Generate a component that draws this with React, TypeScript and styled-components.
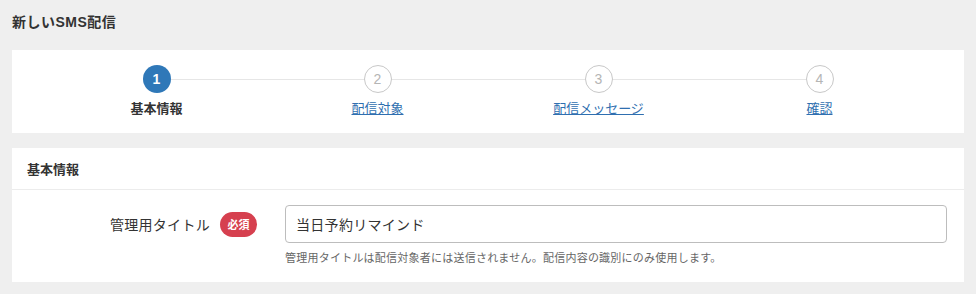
import React from 'react';
import styled, { createGlobalStyle } from 'styled-components';

const GlobalStyle = createGlobalStyle`
    body {
        margin: 0;
        background: #efefef;
        font-family: 'Liberation Sans', 'Noto Sans CJK JP', sans-serif;
        color: #333;
    }
`;

const Page = styled.div`
    padding: 12px 12px 13px 12px;
`;

const PageTitle = styled.h1`
    margin: 0 0 18px 0;
    font-size: 14px;
    line-height: 20px;
    font-weight: bold;
    letter-spacing: 0.5px;
    color: #333;
`;

const Card = styled.div<{ $gap?: number }>`
    background: #fff;
    margin-bottom: ${(p) => p.$gap || 0}px;
`;

const Stepper = styled.ol`
    list-style: none;
    margin: 0;
    padding: 15px 34px 15px 34px;
    display: grid;
    grid-template-columns: repeat(4, 1fr);
`;

const Step = styled.li<{ $last?: boolean }>`
    position: relative;
    display: flex;
    flex-direction: column;
    align-items: center;
    gap: 7px;
    &::after {
        content: '';
        display: ${(p) => (p.$last ? 'none' : 'block')};
        position: absolute;
        top: 14px;
        left: 50%;
        width: 100%;
        height: 1px;
        background: #e6e6e6;
    }
`;

const StepNum = styled.span<{ $active?: boolean }>`
    position: relative;
    z-index: 1;
    box-sizing: border-box;
    width: 28px;
    height: 28px;
    border-radius: 50%;
    display: flex;
    align-items: center;
    justify-content: center;
    font-size: 14px;
    font-weight: ${(p) => (p.$active ? 'bold' : 'normal')};
    background: ${(p) => (p.$active ? '#2f78b8' : '#fff')};
    color: ${(p) => (p.$active ? '#fff' : '#b5b5b5')};
    border: ${(p) => (p.$active ? 'none' : '1px solid #c8c8c8')};
`;

const StepLabel = styled.span`
    font-size: 13px;
    line-height: 18px;
    font-weight: bold;
    color: #333;
`;

const StepLink = styled.a`
    font-size: 13px;
    line-height: 18px;
    color: #2f6fb0;
    text-decoration: underline;
`;

const CardHeader = styled.div`
    height: 42px;
    box-sizing: border-box;
    padding: 0 15px;
    display: flex;
    align-items: center;
    font-size: 13px;
    font-weight: bold;
    border-bottom: 1px solid #ececec;
`;

const FormRow = styled.div`
    display: grid;
    grid-template-columns: 245px 1fr;
    column-gap: 28px;
    padding: 15px 17px 16px 0;
`;

const FieldLabel = styled.div`
    height: 38px;
    display: flex;
    align-items: center;
    justify-content: flex-end;
    gap: 10px;
    font-size: 14px;
    letter-spacing: 0.3px;
    color: #333;
`;

const Required = styled.span`
    display: inline-flex;
    align-items: center;
    justify-content: center;
    width: 37px;
    height: 25px;
    border-radius: 13px;
    background: #d6404f;
    color: #fff;
    font-size: 11px;
    font-weight: bold;
    letter-spacing: 0;
`;

const Field = styled.div`
    display: flex;
    flex-direction: column;
    gap: 7px;
`;

const TextInput = styled.input`
    box-sizing: border-box;
    width: 100%;
    height: 38px;
    padding: 0 10px;
    border: 1px solid #bdbdbd;
    border-radius: 4px;
    font-family: 'Liberation Sans', 'Noto Sans CJK JP', sans-serif;
    font-size: 14px;
    letter-spacing: 0.3px;
    color: #333;
    outline: none;
`;

const Help = styled.p`
    margin: 0;
    font-size: 11px;
    line-height: 16px;
    letter-spacing: 0.23px;
    color: #666;
`;

const steps = ['基本情報', '配信対象', '配信メッセージ', '確認'];

const App: React.FC = () => {
    return (
        <Page>
            <GlobalStyle />
            <PageTitle>新しいSMS配信</PageTitle>
            <Card $gap={15}>
                <Stepper>
                    {steps.map((s, i) => (
                        <Step key={s} $last={i === steps.length - 1}>
                            <StepNum $active={i === 0}>{i + 1}</StepNum>
                            {i === 0 ? <StepLabel>{s}</StepLabel> : <StepLink href="#">{s}</StepLink>}
                        </Step>
                    ))}
                </Stepper>
            </Card>
            <Card>
                <CardHeader>基本情報</CardHeader>
                <FormRow>
                    <FieldLabel>
                        管理用タイトル
                        <Required>必須</Required>
                    </FieldLabel>
                    <Field>
                        <TextInput defaultValue="当日予約リマインド" />
                        <Help>管理用タイトルは配信対象者には送信されません。配信内容の識別にのみ使用します。</Help>
                    </Field>
                </FormRow>
            </Card>
        </Page>
    );
};

export default App;
